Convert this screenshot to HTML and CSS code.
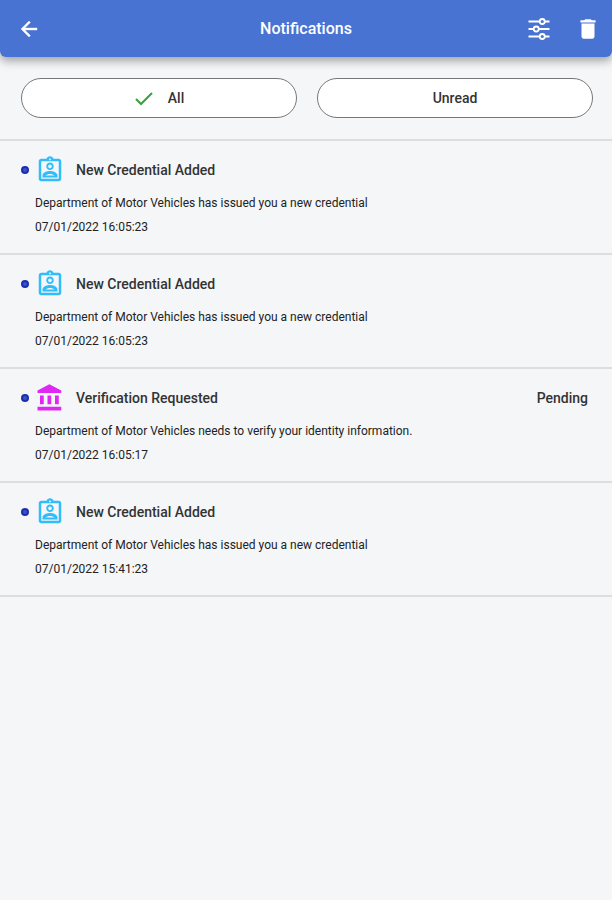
FILE: index.html
```html
<!DOCTYPE html>
<html lang="en">
  <head>
    <meta charset="UTF-8" />
    <meta name="viewport" content="width=device-width, initial-scale=1.0" />
    <title>Notifications</title>
    <link rel="stylesheet" href="styles.css">
  </head>
  <body>
    <!-- Icons shared by the list items -->
    <svg width="0" height="0" class="sprite" aria-hidden="true">
      <symbol id="icon-badge" viewBox="0 0 24 24">
        <path d="M19 3h-4.180C14.400 1.840 13.300 1 12 1s-2.400.84-2.820 2H5c-1.100 0-2 .9-2 2v14c0 1.100.9 2 2 2h14c1.100 0 2-.9 2-2V5c0-1.100-.9-2-2-2zm-7-.25c.41 0 .75.34.75.75s-.34.75-.75.75-.75-.34-.75-.75.340-.75.750-.75zM19 19H5V5h14v14zM12 6c-1.650 0-3 1.350-3 3s1.350 3 3 3 3-1.350 3-3-1.350-3-3-3zm0 4.500c-.83 0-1.500-.67-1.500-1.500s.67-1.500 1.500-1.500 1.500.67 1.500 1.500-.67 1.500-1.500 1.500zM6 16.470V18h12v-1.530c0-2.500-3.970-3.580-6-3.580s-6 1.070-6 3.580zm2.310-.08c.69-.56 2.380-1.120 3.690-1.120s3.010.56 3.690 1.120H8.310z" />
      </symbol>
      <symbol id="icon-bank" viewBox="0 0 24 24">
        <path d="M4 10v7h3v-7H4zm6 0v7h3v-7h-3zM2 22h19v-3H2v3zm14-12v7h3v-7h-3zm-4.500-9L2 6v2h19V6l-9.500-5z" />
      </symbol>
    </svg>

    <header class="app-bar">
      <a href="#" class="icon-button back" aria-label="Back">
        <svg width="24" height="24" viewBox="0 0 24 24" fill="currentColor" stroke="currentColor" stroke-width=".4"><path d="M20 11H7.830l5.590-5.590L12 4l-8 8 8 8 1.410-1.410L7.830 13H20v-2z" /></svg>
      </a>
      <h1>Notifications</h1>
      <div class="actions">
        <button type="button" class="icon-button" aria-label="Filter">
          <svg width="24" height="24" viewBox="0 0 24 24" fill="none" stroke="currentColor" stroke-width="1.800">
            <path d="M1.500 4.500h11M18 4.500h4.500M1.500 12h5M12 12h10.500M1.500 19.500h11M18 19.500h4.500" />
            <circle cx="15.250" cy="4.500" r="2.500" />
            <circle cx="9.250" cy="12" r="2.500" />
            <circle cx="15.250" cy="19.500" r="2.500" />
          </svg>
        </button>
        <button type="button" class="icon-button" aria-label="Delete">
          <svg width="26" height="26" viewBox="0 0 24 24" fill="currentColor"><path d="M6 19c0 1.100.9 2 2 2h8c1.100 0 2-.9 2-2V7H6v12zM19 4h-3.500l-1-1h-5l-1 1H5v2h14V4z" /></svg>
        </button>
      </div>
    </header>

    <main>
      <div class="filters">
        <button type="button" class="pill" aria-pressed="true">
          <svg class="check" width="20" height="20" viewBox="0 0 20 20" fill="none" stroke="currentColor" stroke-width="2"><path d="M2 11l5 5L18 5" /></svg>
          All
        </button>
        <button type="button" class="pill" aria-pressed="false">Unread</button>
      </div>

      <ul class="notifications">
        <li class="item">
          <div class="item-head">
            <span class="dot"></span>
            <svg class="icon credential" width="30" height="30"><use href="#icon-badge" /></svg>
            <h2>New Credential Added</h2>
          </div>
          <p>Department of Motor Vehicles has issued you a new credential</p>
          <p>07/01/2022 16:05:23</p>
        </li>
        <li class="item">
          <div class="item-head">
            <span class="dot"></span>
            <svg class="icon credential" width="30" height="30"><use href="#icon-badge" /></svg>
            <h2>New Credential Added</h2>
          </div>
          <p>Department of Motor Vehicles has issued you a new credential</p>
          <p>07/01/2022 16:05:23</p>
        </li>
        <li class="item">
          <div class="item-head">
            <span class="dot"></span>
            <svg class="icon verification" width="30" height="30"><use href="#icon-bank" /></svg>
            <h2>Verification Requested</h2>
            <span class="status">Pending</span>
          </div>
          <p>Department of Motor Vehicles needs to verify your identity information.</p>
          <p>07/01/2022 16:05:17</p>
        </li>
        <li class="item">
          <div class="item-head">
            <span class="dot"></span>
            <svg class="icon credential" width="30" height="30"><use href="#icon-badge" /></svg>
            <h2>New Credential Added</h2>
          </div>
          <p>Department of Motor Vehicles has issued you a new credential</p>
          <p>07/01/2022 15:41:23</p>
        </li>
      </ul>
    </main>
  </body>
</html>
```
FILE: styles.css
```css
body {
  margin: 0;
  background-color: #f4f6f8;
  color: #333;
  font-family: Roboto, "Liberation Sans", sans-serif;
  font-size: 12px;
}

.sprite {
  display: block;
}

/* Top bar */
.app-bar {
  display: grid;
  grid-template-columns: 1fr auto 1fr;
  align-items: center;
  height: 57px;
  padding: 0 11px;
  background-color: #4873d2;
  color: white;
  border-radius: 0 0 6px 6px;
  box-shadow: 0 4px 10px rgba(0, 0, 0, 0.35);
}

.app-bar h1 {
  margin: 0;
  font-size: 16px;
  font-weight: 500;
}

.actions {
  display: flex;
  align-items: center;
  justify-content: flex-end;
  gap: 24px;
}

.icon-button {
  display: flex;
  justify-self: start;
  padding: 0;
  border: none;
  background: none;
  color: white;
  cursor: pointer;
}

.back {
  padding-left: 6px;
}

/* All / Unread switch */
.filters {
  display: grid;
  grid-template-columns: 1fr 1fr;
  gap: 20px;
  padding: 21px 19px 21px 21px;
  border-bottom: 2px solid #dcdee0;
}

.pill {
  display: flex;
  align-items: center;
  justify-content: center;
  gap: 14px;
  height: 40px;
  border: 1px solid #777;
  border-radius: 20px;
  background-color: white;
  color: #333;
  font-family: inherit;
  font-size: 14px;
  font-weight: 500;
  cursor: pointer;
}

.check {
  color: #35a23c;
}

/* Notification list */
.notifications {
  margin: 0;
  padding: 0;
  list-style: none;
}

.item {
  padding: 14px 24px 14px 21px;
  border-bottom: 2px solid #dcdee0;
}

.item-head {
  display: flex;
  align-items: center;
  margin-bottom: 6px;
}

.dot {
  width: 4px;
  height: 4px;
  border: 2px solid #1a2fb0;
  border-radius: 50%;
  background-color: #3f51c4;
}

.icon {
  margin: 0 11px 0 6px;
  fill: currentColor;
}

.credential {
  color: #30bdfa;
}

.verification {
  color: #e028f5;
}

.item h2 {
  margin: 0;
  font-size: 14px;
  font-weight: 500;
}

.status {
  margin-left: auto;
  font-size: 14px;
  font-weight: 500;
}

.item p {
  margin: 0 0 0 14px;
  color: #222;
  line-height: 24px;
}
```
